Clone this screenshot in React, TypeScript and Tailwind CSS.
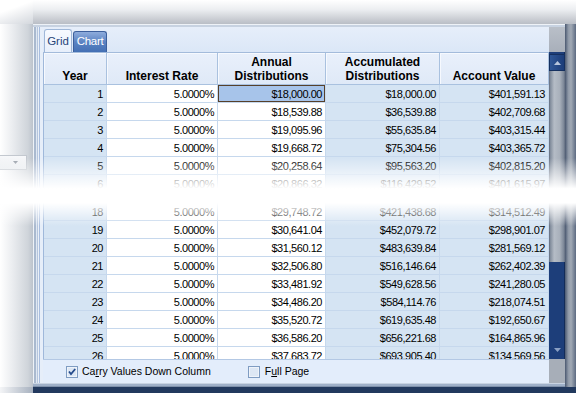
import React from 'react';

type Row = [number, string, string, string];

const topRows: Row[] = [
  [1, '$18,000.00', '$18,000.00', '$401,591.13'],
  [2, '$18,539.88', '$36,539.88', '$402,709.68'],
  [3, '$19,095.96', '$55,635.84', '$403,315.44'],
  [4, '$19,668.72', '$75,304.56', '$403,365.72'],
  [5, '$20,258.64', '$95,563.20', '$402,815.20'],
  [6, '$20,866.32', '$116,429.52', '$401,615.97'],
];

const bottomRows: Row[] = [
  [18, '$29,748.72', '$421,438.68', '$314,512.49'],
  [19, '$30,641.04', '$452,079.72', '$298,901.07'],
  [20, '$31,560.12', '$483,639.84', '$281,569.12'],
  [21, '$32,506.80', '$516,146.64', '$262,402.39'],
  [22, '$33,481.92', '$549,628.56', '$241,280.05'],
  [23, '$34,486.20', '$584,114.76', '$218,074.51'],
  [24, '$35,520.72', '$619,635.48', '$192,650.67'],
  [25, '$36,586.20', '$656,221.68', '$164,865.96'],
  [26, '$37,683.72', '$693,905.40', '$134,569.56'],
];

const cols = [
  { w: 'w-[63px]', bg: 'bg-[#d5e4f3]', head: ['Year'] },
  { w: 'w-[111px]', bg: 'bg-white', head: ['Interest Rate'] },
  { w: 'w-[108px]', bg: 'bg-white', head: ['Annual', 'Distributions'] },
  { w: 'w-[114px]', bg: 'bg-[#d5e4f3]', head: ['Accumulated', 'Distributions'] },
  { w: 'w-[109px]', bg: 'bg-[#d5e4f3]', head: ['Account Value'] },
];

function GridRow({ row, selected }: { row: Row; selected?: boolean }) {
  const vals = [String(row[0]), '5.0000%', row[1], row[2], row[3]];
  return (
    <div className="flex h-[18px] shrink-0">
      {vals.map((v, i) => (
        <div
          key={i}
          className={`${cols[i].w} ${
            selected && i === 2 ? 'bg-[#a7c4ea] shadow-[inset_0_0_0_1px_#56402a]' : cols[i].bg
          } flex shrink-0 items-center justify-end border-r border-b border-[#c6d8ed] pt-[2px] pr-[3px] text-[11px] tracking-[-0.45px]`}
        >
          {v}
        </div>
      ))}
    </div>
  );
}

function Checkbox({ checked }: { checked?: boolean }) {
  return (
    <svg width="12" height="12" viewBox="0 0 12 12">
      <rect x="0.5" y="0.5" width="11" height="11" fill="#dde7f4" stroke="#7f9cc2" />
      <rect x="1.5" y="1.5" width="9" height="9" fill="none" stroke="#eef3fa" />
      {checked && <path d="M3 5.5 L5 8 L9.2 3" fill="none" stroke="#254b8c" strokeWidth="1.8" />}
    </svg>
  );
}

function Scrollbar() {
  return (
    <div className="flex h-[307px] flex-col bg-[#1d3e7a] pt-[2px] pb-[2px] shadow-[inset_-1px_0_0_#132b58]">
      <div className="flex h-[17px] items-center justify-center border border-[#15305f] bg-[linear-gradient(to_right,#2f5797,#1c3d79)]">
        <svg width="7" height="4" viewBox="0 0 7 4">
          <polygon points="0,4 3.5,0 7,4" fill="#b7c6dd" />
        </svg>
      </div>
      <div className="h-[191px] border-x border-[#6c7789] bg-[linear-gradient(to_right,#7e8999,#b5bcc6_30%,#a8b0bb_70%,#7a8596)]" />
      <div className="flex-1" />
      <div className="flex h-[14px] items-center justify-center">
        <svg width="7" height="4" viewBox="0 0 7 4">
          <polygon points="0,0 7,0 3.5,4" fill="#8aa0c4" />
        </svg>
      </div>
    </div>
  );
}

function Window() {
  return (
    <div className="flex w-[532px] flex-col">
      <div className="h-[3px] bg-[linear-gradient(to_bottom,#eef2f7_0_1px,#c7d2e1_1px)]" />
      <div className="flex min-h-0 flex-1">
        <div className="w-[10px] bg-[linear-gradient(to_right,#eef2f7_0_1px,#a9b9cf_1px_3px,#e0e8f3_3px_4px,#b6c6dd_4px_5px,#eaf0f8_5px_6px,#a8bddf_6px_7px,#e6eef9_7px)]" />
        <div className="flex w-[506px] flex-col">
          {/* Tabs */}
          <div className="flex h-[25px] items-end gap-px bg-[linear-gradient(to_bottom,#e6eefa,#dbe7f7)] pl-px">
            <div className="flex h-[23px] w-[28px] items-center justify-center rounded-t-[3px] border border-b-0 border-[#9fb7d8] bg-[linear-gradient(to_bottom,#f7faff,#e7effb)] pt-px text-[11.5px] text-[#27457a]">
              Grid
            </div>
            <div className="flex h-[21px] w-[34px] items-center justify-center rounded-t-[3px] border border-b-0 border-[#3c5f9c] bg-[linear-gradient(to_bottom,#8eacdc,#5b83c3_50%,#4470b4)] text-[11.5px] tracking-[-0.3px] text-white">
              Chart
            </div>
          </div>
          <div className="h-px bg-[#a3bbdb]" />

          {/* Grid */}
          <div className="flex h-[306px] flex-col overflow-hidden border-l border-[#9fb8da]">
            <div className="flex h-[32px] shrink-0">
              {cols.map((c, i) => (
                <div
                  key={i}
                  className={`${c.w} flex shrink-0 flex-col items-center justify-end border-r border-b border-[#a9c1df] bg-[linear-gradient(to_bottom,#e9f0fb,#dfe9f7)] pb-[1px] text-[12px] leading-[14px] font-bold shadow-[inset_1px_1px_0_#f6f9fe]`}
                >
                  {c.head.map((h) => (
                    <span key={h}>{h}</span>
                  ))}
                </div>
              ))}
            </div>
            {topRows.map((r, i) => (
              <GridRow key={r[0]} row={r} selected={i === 0} />
            ))}
            <div className="h-[10px] shrink-0" />
            {bottomRows.map((r) => (
              <GridRow key={r[0]} row={r} />
            ))}
          </div>

          {/* Options */}
          <div className="flex h-[24px] items-center border-t border-[#b3c8e4] bg-[#e3edfb] pl-[23px] text-[10.5px]">
            <Checkbox checked />
            <span className="ml-[4px]">
              Ca<span className="underline">r</span>ry Values Down Column
            </span>
            <span className="ml-[37px]">
              <Checkbox />
            </span>
            <span className="ml-[5px]">
              F<span className="underline">u</span>ll Page
            </span>
          </div>
        </div>
        <div className="flex w-[16px] flex-col">
          <div className="h-[25px] bg-[linear-gradient(to_bottom,#b9bfc8,#a8afba)]" />
          <Scrollbar />
          <div className="h-[24px] bg-[#a7aeb8]" />
        </div>
      </div>
      <div className="h-[4px] bg-[linear-gradient(to_bottom,#c8d3e2_0_1px,#9fb0c8_1px_3px,#7f91ab_3px)]" />
    </div>
  );
}

export default function App() {
  return (
    <div className="relative h-[393px] w-[576px] overflow-hidden bg-white font-['Liberation_Sans',Arial,sans-serif] text-black">
      <div className="flex h-[24px]">
        <div className="w-[33px] bg-[linear-gradient(160deg,#ffffff_35%,#d3d7dd)]" />
        <div className="flex-1 bg-[linear-gradient(to_bottom,#ffffff,#eceef1_40%,#cacdd3_80%,#b9bec6)]" />
      </div>
      <div className="flex h-[363px]">
        <div className="w-[33px] bg-[linear-gradient(to_right,#ffffff,#eceef1_35%,#cfd4da_85%,#bcc3cc)]" />
        <Window />
        <div className="w-[11px] bg-[linear-gradient(to_right,#4a5870,#8f99a8_30%,#a2aab5_55%,#5d6b82)]" />
      </div>
      <div className="flex h-[6px]">
        <div className="w-[33px] bg-[linear-gradient(to_right,#f4f5f7,#a7b1bf)]" />
        <div className="flex-1 bg-[#22395e]" />
      </div>

      {/* combo box of the window behind */}
      <div className="absolute top-[155px] left-[-6px] flex h-[15px] w-[33px] items-center justify-end border border-[#c3c8cf] bg-[linear-gradient(to_bottom,#f7f8fa,#e9ecf0)] pr-[8px]">
        <svg width="5" height="3" viewBox="0 0 5 3">
          <polygon points="0,0 5,0 2.5,3" fill="#9aa1ab" />
        </svg>
      </div>

      {/* torn / faded middle */}
      <div className="pointer-events-none absolute top-[158px] right-0 left-0 h-[68px] bg-[linear-gradient(to_bottom,rgba(255,255,255,0)_0%,#ffffff_45%,#ffffff_66%,rgba(255,255,255,0)_100%)]" />
    </div>
  );
}
